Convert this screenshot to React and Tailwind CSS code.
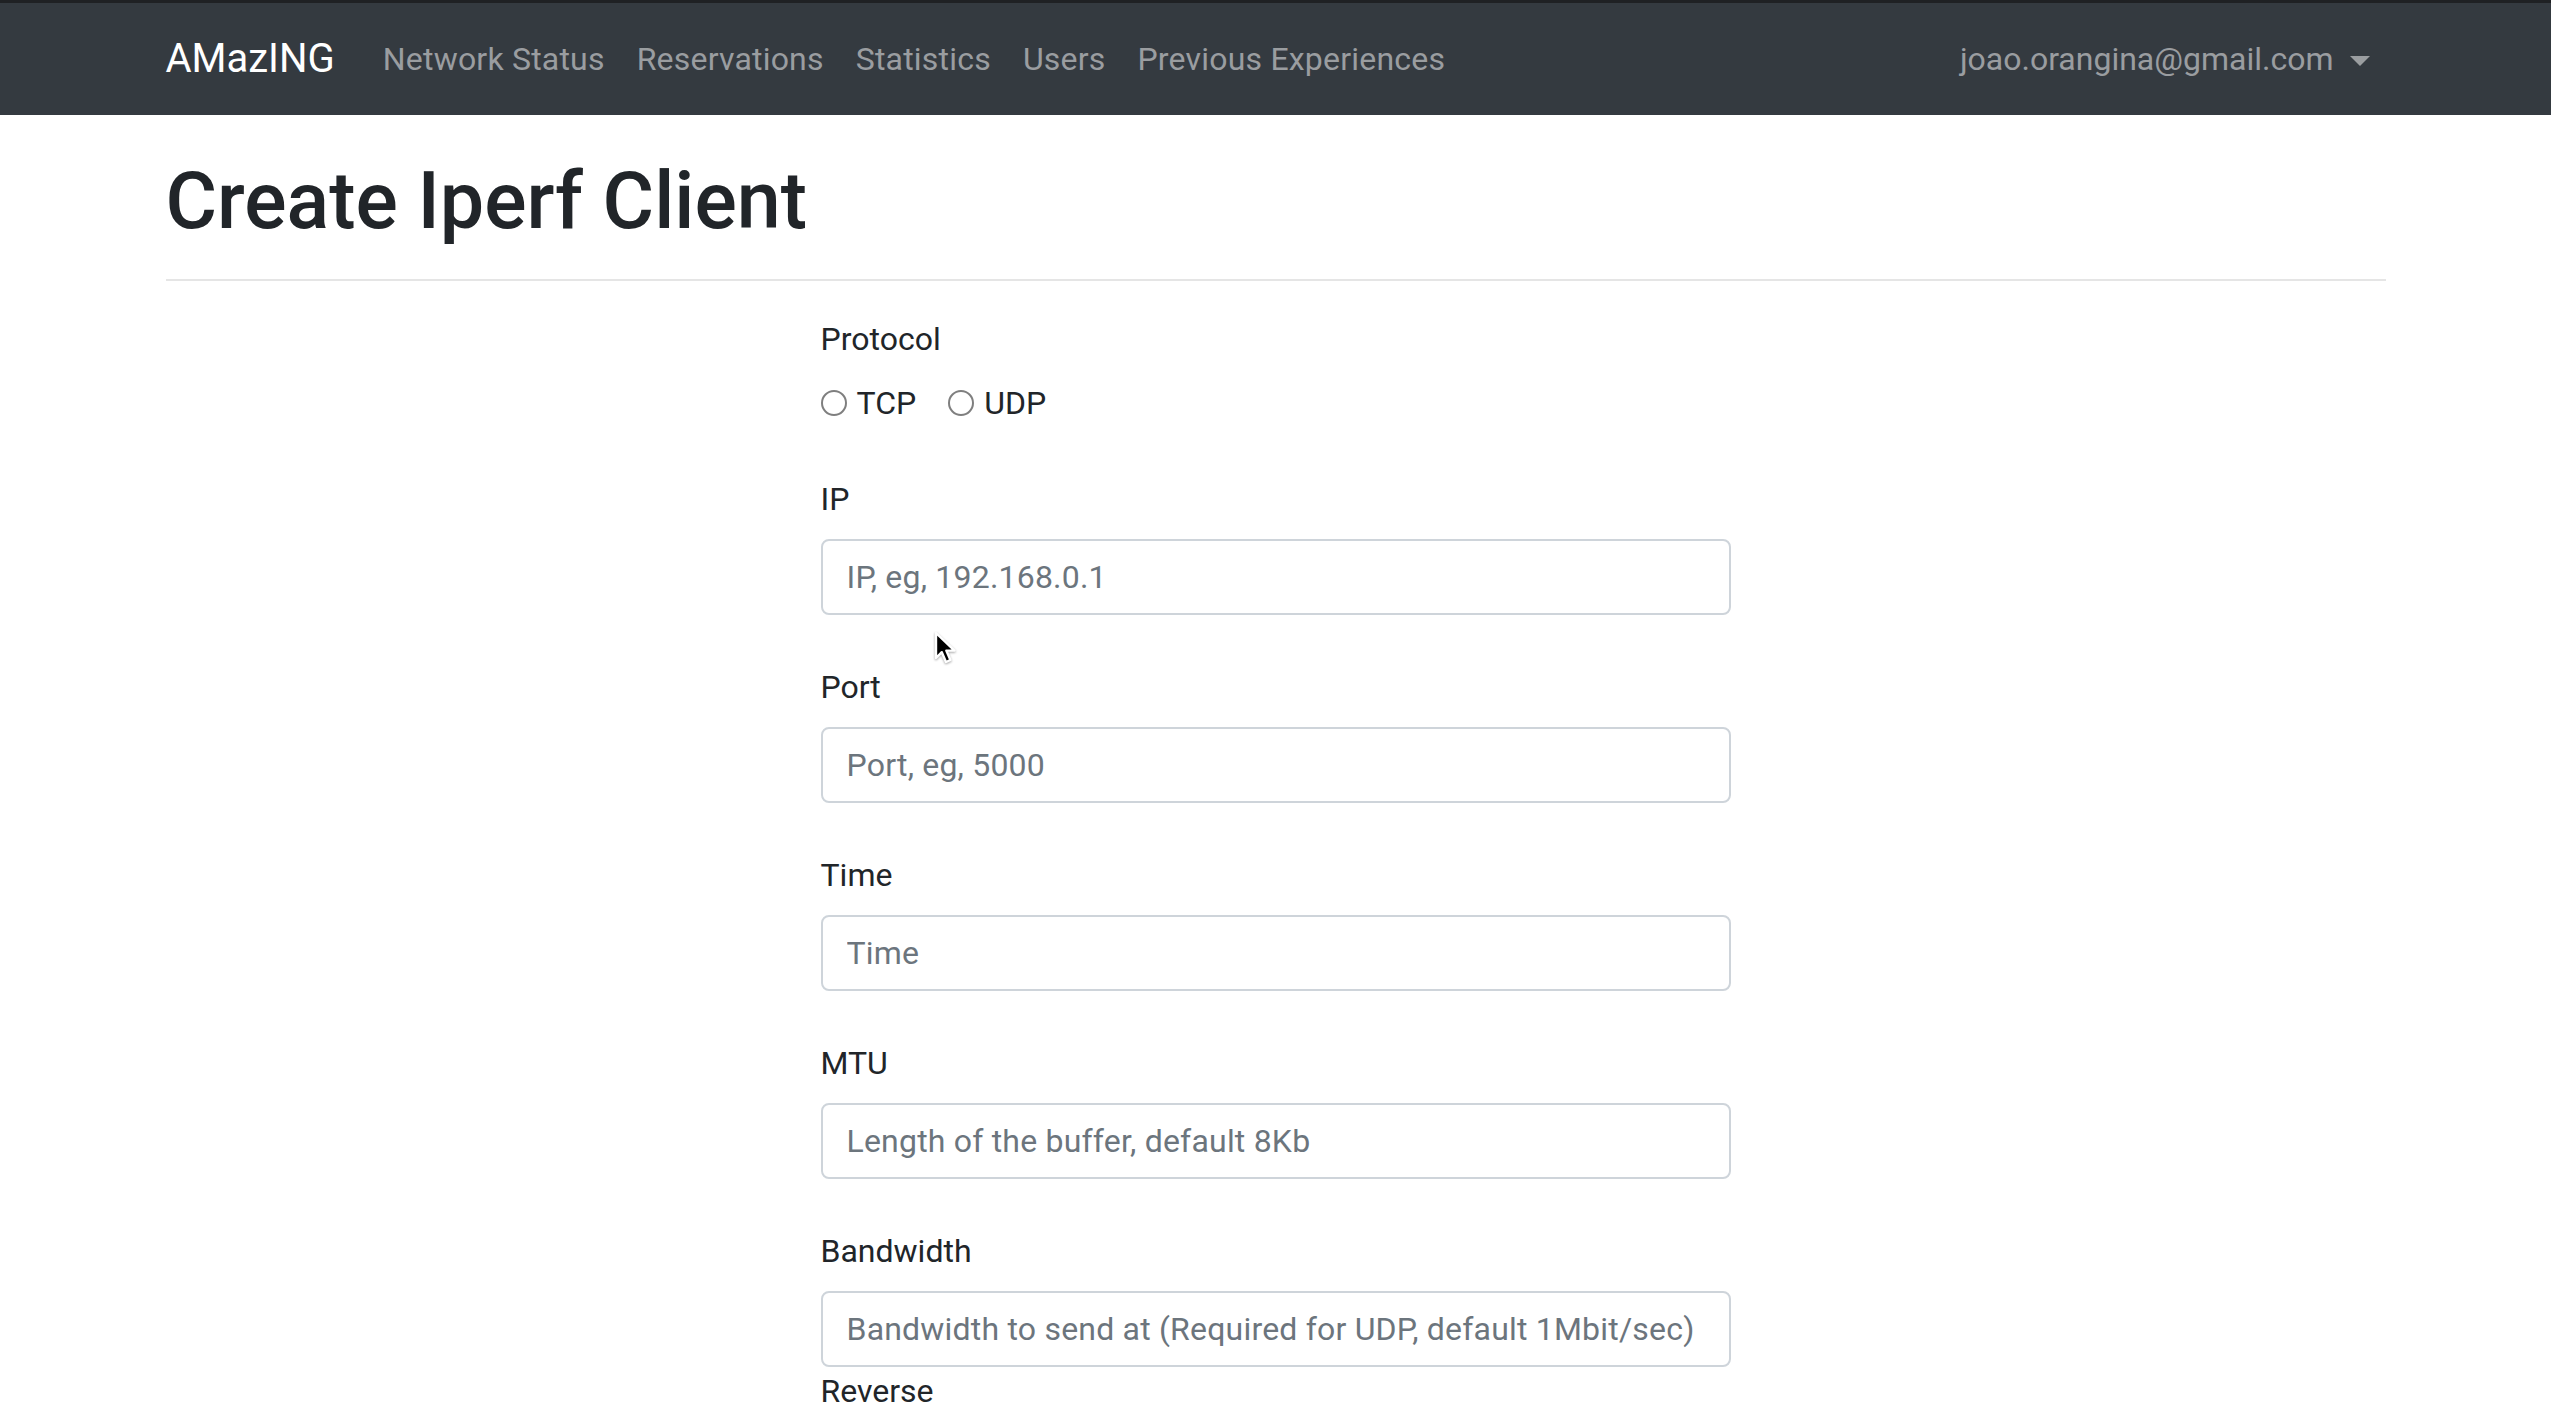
import React from "react";

const fields = [
  { label: "IP", placeholder: "IP, eg, 192.168.0.1" },
  { label: "Port", placeholder: "Port, eg, 5000" },
  { label: "Time", placeholder: "Time" },
  { label: "MTU", placeholder: "Length of the buffer, default 8Kb" },
  { label: "Bandwidth", placeholder: "Bandwidth to send at (Required for UDP, default 1Mbit/sec)" },
];

const links = ["Network Status", "Reservations", "Statistics", "Users", "Previous Experiences"];

function Radio({ label }) {
  return (
    <label className="flex items-center mr-[32px]">
      <input
        type="radio"
        name="protocol"
        className="appearance-none w-[26px] h-[26px] rounded-full border-2 border-[#7f7f7f] bg-white mr-[10px] m-0"
      />
      <span>{label}</span>
    </label>
  );
}

function Cursor() {
  return (
    <svg
      className="absolute left-[933px] top-[631px] pointer-events-none drop-shadow-[0_1px_1px_rgba(0,0,0,0.35)]"
      width="26"
      height="36"
      viewBox="0 0 26 36"
    >
      <path
        d="M3 2 L3 27 L8.8 21.2 L13 31 L17.4 29 L13.3 19.6 L21.5 19.6 Z"
        fill="#000"
        stroke="#fff"
        strokeWidth="2.4"
        strokeLinejoin="round"
      />
    </svg>
  );
}

export default function App() {
  return (
    <div className="relative min-h-screen bg-white text-[#212529] font-[Roboto,'Liberation_Sans',sans-serif] overflow-hidden">
      <div className="h-[3px] bg-[#1f2124]" />
      <nav className="bg-[#343a40] h-[112px] flex items-center">
        <div className="w-[2220px] mx-auto flex items-center">
          <a className="text-white text-[40px] leading-[60px] py-[10px] mr-[32px]">AMazING</a>
          <div className="flex items-center">
            {links.map((l) => (
              <a key={l} className="px-[16px] text-[32px] leading-[48px] tracking-[0.2px] text-[#9a9da0]">
                {l}
              </a>
            ))}
          </div>
          <a className="ml-auto px-[16px] text-[32px] leading-[48px] text-[#9a9da0] flex items-center">
            <span>joao.orangina@gmail.com</span>
            <span className="ml-[16px] mt-[4px] w-0 h-0 border-t-[10px] border-t-[#9a9da0] border-x-[10px] border-x-transparent" />
          </a>
        </div>
      </nav>

      <main className="w-[2220px] mx-auto">
        <h1 className="mt-[38px] text-[79px] leading-[96px] font-medium">Create Iperf Client</h1>
        <hr className="mt-[30px] h-[2px] border-0 bg-black/10" />

        <form className="w-[910px] mx-auto mt-[34px] text-[32px] leading-[48px]">
          <div className="mb-[16px]">Protocol</div>
          <div className="flex items-center h-[48px]">
            <Radio label="TCP" />
            <Radio label="UDP" />
          </div>

          {fields.map((f) => (
            <div key={f.label} className="mt-[48px]">
              <label className="block mb-[16px]">{f.label}</label>
              <input
                type="text"
                placeholder={f.placeholder}
                className="block w-full h-[76px] border-2 border-[#ced4da] rounded-[8px] px-[24px] py-[12px] text-[32px] leading-[48px] tracking-[0.2px] text-[#495057] placeholder:text-[#6c757d] outline-none bg-white"
              />
            </div>
          ))}
          <label className="block">Reverse</label>
        </form>
      </main>
      <Cursor />
    </div>
  );
}
